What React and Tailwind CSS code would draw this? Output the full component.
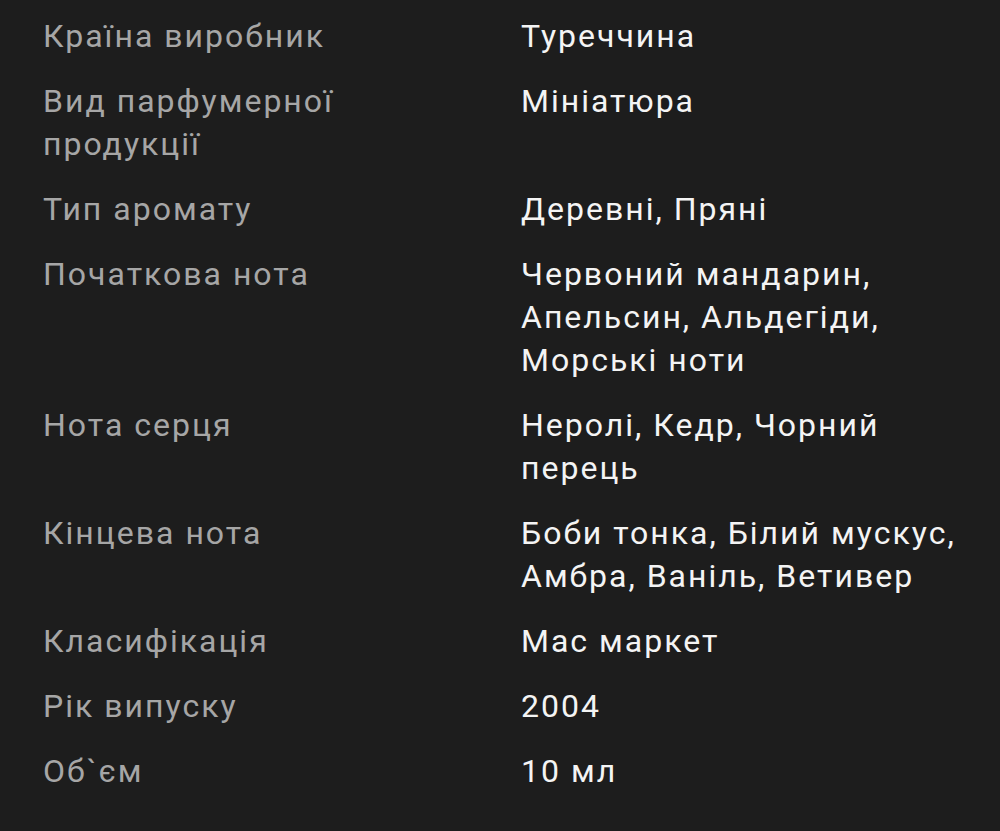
import React from "react";

const specs = [
  ["Країна виробник", "Туреччина"],
  ["Вид парфумерної продукції", "Мініатюра"],
  ["Тип аромату", "Деревні, Пряні"],
  ["Початкова нота", "Червоний мандарин, Апельсин, Альдегіди, Морські ноти"],
  ["Нота серця", "Неролі, Кедр, Чорний перець"],
  ["Кінцева нота", "Боби тонка, Білий мускус, Амбра, Ваніль, Ветивер"],
  ["Класифікація", "Мас маркет"],
  ["Рік випуску", "2004"],
  ["Об`єм", "10 мл"],
];

export default function App() {
  return (
    <div
      className="min-h-[831px] w-full bg-[#1d1d1d] pl-[43px] pr-[40px] pt-[15px]"
      style={{ fontFamily: "Roboto, 'Noto Sans', sans-serif" }}
    >
      <dl className="flex flex-col gap-[22px] text-[32px] leading-[43px] tracking-[2px]">
        {specs.map(([label, value]) => (
          <div key={label} className="grid grid-cols-[478px_1fr]">
            <dt className="pr-[40px] text-[#a6a6a6]">{label}</dt>
            <dd className="text-[#f4f4f4]">{value}</dd>
          </div>
        ))}
      </dl>
    </div>
  );
}
